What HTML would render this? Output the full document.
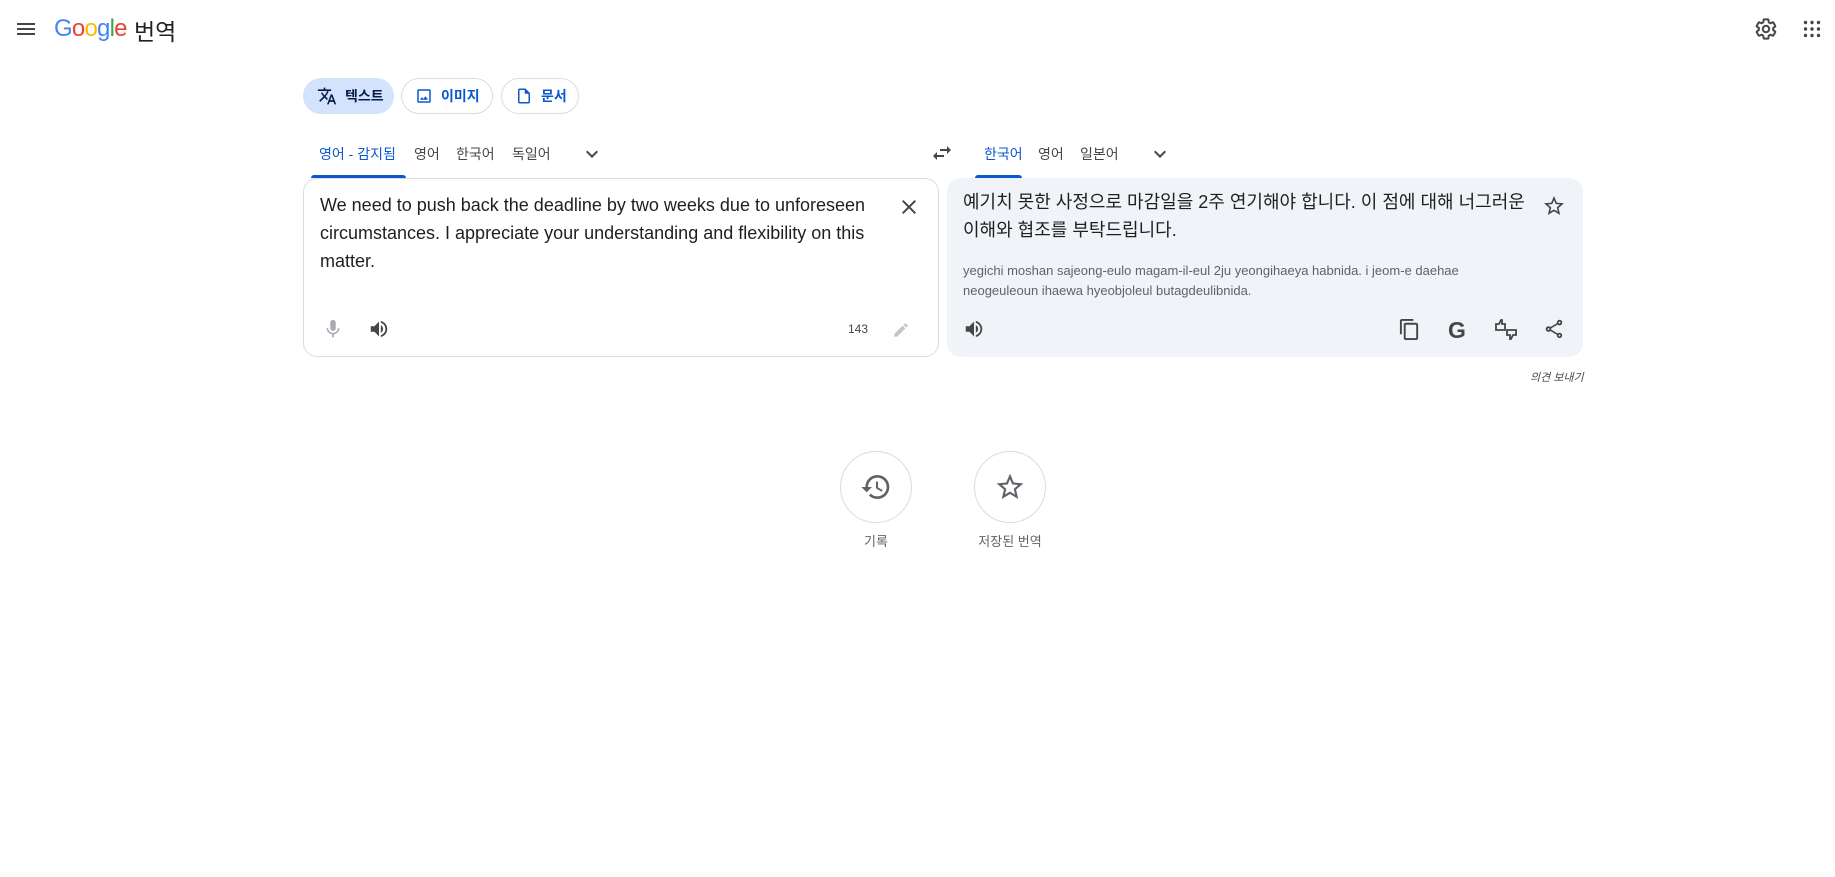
<!DOCTYPE html>
<html><head><meta charset="utf-8"><style>
*{box-sizing:border-box;margin:0;padding:0}
body{width:1835px;height:877px;background:#fff;font-family:"Liberation Sans","Noto Sans CJK KR",sans-serif;color:#202124;position:relative;overflow:hidden}
.a{position:absolute}
.ic{position:absolute;fill:#5f6368}
.chip{position:absolute;top:78px;height:36px;border:1px solid #dadce0;border-radius:18px;font-size:14px;font-weight:bold;color:#0b57d0;display:flex;align-items:center;gap:8px;padding-left:13px}
.tab{position:absolute;top:144px;font-size:14px;color:#444746}
.box{position:absolute;top:178px;height:179px;width:636px;border-radius:14px}
</style></head><body>
<svg class="ic" style="left:14px;top:17px;fill:#444746" width="24" height="24" viewBox="0 0 24 24"><path d="M3 18h18v-2H3v2zm0-5h18v-2H3v2zm0-7v2h18V6H3z"/></svg>
<div class="a" style="left:54px;top:15px;font-size:24px;letter-spacing:-0.8px"><span style="color:#4285f4">G</span><span style="color:#ea4335">o</span><span style="color:#fbbc05">o</span><span style="color:#4285f4">g</span><span style="color:#34a853">l</span><span style="color:#ea4335">e</span></div>
<div class="a" style="left:134px;top:13px;font-size:23px;color:#202124">번역</div>
<svg class="ic" style="left:1754px;top:17px;fill:none;stroke:#444746;stroke-width:2" width="24" height="24" viewBox="0 0 24 24"><path d="M19.14 12.94c.04-.3.06-.61.06-.94 0-.32-.02-.64-.07-.94l2.03-1.58a.49.49 0 00.12-.61l-1.92-3.32a.488.488 0 00-.59-.22l-2.39.96c-.5-.38-1.030-.7-1.62-.94l-.36-2.54a.484.484 0 00-.48-.41h-3.84c-.24 0-.43.17-.47.41l-.36 2.54c-.59.24-1.13.57-1.62.94l-2.39-.96c-.22-.08-.47 0-.59.22L2.74 8.87c-.12.21-.08.47.12.61l2.03 1.58c-.05.3-.09.63-.09.94s.02.64.07.94l-2.03 1.58a.49.49 0 00-.12.61l1.92 3.32c.12.22.37.29.59.22l2.39-.96c.5.38 1.03.7 1.62.94l.36 2.54c.05.24.24.41.48.41h3.84c.24 0 .44-.17.47-.41l.36-2.54c.59-.24 1.13-.56 1.62-.94l2.39.96c.22.08.47 0 .59-.22l1.92-3.32c.12-.22.07-.47-.12-.61l-2.01-1.58z"/><circle cx="12" cy="12" r="3.2"/></svg>
<svg class="ic" style="left:1803px;top:20px;fill:#444746" width="18" height="18" viewBox="0 0 18 18"><g><circle cx="2.5" cy="2.5" r="1.7"/><circle cx="9" cy="2.5" r="1.7"/><circle cx="15.5" cy="2.5" r="1.7"/><circle cx="2.5" cy="9" r="1.7"/><circle cx="9" cy="9" r="1.7"/><circle cx="15.5" cy="9" r="1.7"/><circle cx="2.5" cy="15.5" r="1.7"/><circle cx="9" cy="15.5" r="1.7"/><circle cx="15.5" cy="15.5" r="1.7"/></g></svg>

<div class="chip" style="left:303px;width:91px;background:#d3e3fd;border-color:#d3e3fd;color:#041e49"><svg width="20" height="20" viewBox="0 0 24 24" fill="#041e49"><path d="M12.87 15.07l-2.54-2.51.03-.03A17.52 17.52 0 0014.07 6H17V4h-7V2H8v2H1v2h11.17C11.5 7.92 10.44 9.75 9 11.350 8.07 10.32 7.3 9.19 6.69 8h-2c.73 1.63 1.73 3.17 2.98 4.56l-5.09 5.02L4 19l5-5 3.11 3.11.76-2.04zM18.5 10h-2L12 22h2l1.12-3h4.75L21 22h2l-4.5-12zm-2.62 7l1.62-4.33L19.12 17h-3.24z"/></svg>텍스트</div>
<div class="chip" style="left:401px;width:92px"><svg width="18" height="18" viewBox="0 0 24 24" fill="#0b57d0"><path d="M19 3H5a2 2 0 00-2 2v14a2 2 0 002 2h14a2 2 0 002-2V5a2 2 0 00-2-2zm0 16H5V5h14v14zm-5.04-6.71l-2.75 3.54-1.96-2.36L6.5 17h11l-3.54-4.71z"/></svg>이미지</div>
<div class="chip" style="left:501px;width:78px"><svg width="18" height="18" viewBox="0 0 24 24" fill="#0b57d0"><path d="M14 2H6c-1.1 0-2 .9-2 2v16c0 1.1.9 2 2 2h12c1.1 0 2-.9 2-2V8l-6-6zm4 18H6V4h7v5h5v11z"/></svg>문서</div>

<div class="tab" style="left:319px;color:#0b57d0">영어 - 감지됨</div>
<div class="a" style="left:311px;top:175px;width:95px;height:3px;background:#0b57d0;border-radius:3px 3px 0 0"></div>
<div class="tab" style="left:414px">영어</div>
<div class="tab" style="left:456px">한국어</div>
<div class="tab" style="left:512px">독일어</div>
<svg class="ic" style="left:580px;top:142px;fill:#444746" width="24" height="24" viewBox="0 0 24 24"><path d="M16.59 8.59L12 13.17 7.41 8.59 6 10l6 6 6-6z"/></svg>
<svg class="ic" style="left:930px;top:141px;fill:#444746" width="24" height="24" viewBox="0 0 24 24"><path d="M6.99 11L3 15l3.99 4v-3H14v-2H6.99v-3zM21 9l-3.99-4v3H10v2h7.01v3L21 9z"/></svg>
<div class="tab" style="left:984px;color:#0b57d0">한국어</div>
<div class="a" style="left:975px;top:175px;width:47px;height:3px;background:#0b57d0;border-radius:3px 3px 0 0"></div>
<div class="tab" style="left:1038px">영어</div>
<div class="tab" style="left:1080px">일본어</div>
<svg class="ic" style="left:1148px;top:142px;fill:#444746" width="24" height="24" viewBox="0 0 24 24"><path d="M16.59 8.59L12 13.17 7.41 8.59 6 10l6 6 6-6z"/></svg>

<div class="box" style="left:303px;border:1px solid #dadce0"></div>
<div class="a" style="left:320px;top:191px;width:570px;font-size:18px;line-height:28px;color:#1f1f1f">We need to push back the deadline by two weeks due to unforeseen circumstances. I appreciate your understanding and flexibility on this matter.</div>
<svg class="ic" style="left:897px;top:195px;fill:#444746" width="24" height="24" viewBox="0 0 24 24"><path d="M19 6.41L17.59 5 12 10.59 6.41 5 5 6.41 10.59 12 5 17.59 6.41 19 12 13.41 17.59 19 19 17.59 13.41 12z"/></svg>
<svg class="ic" style="left:322px;top:318px;fill:#a8abaf" width="22" height="22" viewBox="0 0 24 24"><path d="M12 14c1.66 0 3-1.34 3-3V5c0-1.66-1.34-3-3-3S9 3.34 9 5v6c0 1.66 1.34 3 3 3zm5.3-3c0 3-2.54 5.1-5.3 5.1S6.7 14 6.7 11H5c0 3.41 2.72 6.23 6 6.72V21h2v-3.28c3.28-.48 6-3.3 6-6.72h-1.7z"/></svg>
<svg class="ic" style="left:368px;top:318px;fill:#444746" width="22" height="22" viewBox="0 0 24 24"><path d="M3 9v6h4l5 5V4L7 9H3zm13.5 3A4.5 4.5 0 0014 7.97v8.05c1.48-.73 2.5-2.25 2.5-4.02zM14 3.23v2.06c2.89.86 5 3.54 5 6.71s-2.11 5.850-5 6.71v2.06c4.01-.91 7-4.49 7-8.77s-2.99-7.86-7-8.77z"/></svg>
<div class="a" style="left:848px;top:322px;font-size:12px;color:#444746">143</div>
<svg class="ic" style="left:892px;top:321px;fill:#c4c7c5" width="18" height="18" viewBox="0 0 24 24"><path d="M3 17.25V21h3.75L17.81 9.94l-3.75-3.75L3 17.25zM20.71 7.04a1 1 0 000-1.41l-2.34-2.34a1 1 0 00-1.41 0l-1.830 1.83 3.75 3.75 1.83-1.83z"/></svg>

<div class="box" style="left:947px;background:#f0f4f9"></div>
<div class="a" style="left:963px;top:188px;width:565px;font-size:18px;line-height:28px;color:#1f1f1f">예기치 못한 사정으로 마감일을 2주 연기해야 합니다. 이 점에 대해 너그러운 이해와 협조를 부탁드립니다.</div>
<svg class="ic" style="left:1542px;top:194px;fill:#444746" width="24" height="24" viewBox="0 0 24 24"><path d="M22 9.24l-7.19-.62L12 2 9.19 8.63 2 9.24l5.46 4.73L5.82 21 12 17.27 18.18 21l-1.63-7.03L22 9.24zM12 15.4l-3.76 2.27 1-4.28-3.32-2.88 4.38-.38L12 6.1l1.71 4.04 4.38.38-3.32 2.88 1 4.28L12 15.4z"/></svg>
<div class="a" style="left:963px;top:261px;width:540px;font-size:13px;line-height:20px;color:#5f6368">yegichi moshan sajeong-eulo magam-il-eul 2ju yeongihaeya habnida. i jeom-e daehae neogeuleoun ihaewa hyeobjoleul butagdeulibnida.</div>
<svg class="ic" style="left:963px;top:318px;fill:#444746" width="22" height="22" viewBox="0 0 24 24"><path d="M3 9v6h4l5 5V4L7 9H3zm13.5 3A4.5 4.5 0 0014 7.97v8.05c1.48-.73 2.5-2.25 2.5-4.02zM14 3.23v2.06c2.89.86 5 3.54 5 6.71s-2.11 5.85-5 6.71v2.06c4.01-.91 7-4.49 7-8.77s-2.99-7.86-7-8.77z"/></svg>
<svg class="ic" style="left:1398px;top:318px;fill:#444746" width="23" height="23" viewBox="0 0 24 24"><path d="M16 1H4c-1.1 0-2 .9-2 2v14h2V3h12V1zm3 4H8c-1.1 0-2 .9-2 2v14c0 1.1.9 2 2 2h11c1.1 0 2-.9 2-2V7c0-1.1-.9-2-2-2zm0 16H8V7h11v14z"/></svg>
<div class="a" style="left:1448px;top:317px;font-size:23px;font-weight:bold;color:#444746">G</div>
<svg class="ic" style="left:1494px;top:318px;fill:none;stroke:#444746;stroke-width:1.8" width="24" height="24" viewBox="0 0 24 24"><path d="M2 12V6h3l2-4h1v4h3v6zM13 12h9v5h-3l-2 4h-1v-4h-3z"/></svg>
<svg class="ic" style="left:1543px;top:318px;fill:#444746" width="22" height="22" viewBox="0 0 24 24"><path d="M18 16.08c-.76 0-1.44.3-1.96.77L8.91 12.7c.05-.23.09-.46.09-.7s-.04-.47-.09-.7l7.05-4.11A2.99 2.99 0 0021 5a3 3 0 10-5.91.7L8.04 9.81A2.99 2.99 0 003 12a3 3 0 005.04 2.19l7.12 4.16c-.05.21-.08.43-.08.65A2.92 2.92 0 1018 16.08zM18 4c.55 0 1 .45 1 1s-.45 1-1 1-1-.45-1-1 .45-1 1-1zM6 13c-.55 0-1-.45-1-1s.45-1 1-1 1 .45 1 1-.45 1-1 1zm12 7.02c-.55 0-1-.45-1-1s.45-1 1-1 1 .45 1 1-.45 1-1 1z"/></svg>
<div class="a" style="left:1530px;top:369px;font-size:11px;font-style:italic;color:#444746">의견 보내기</div>

<div class="a" style="left:840px;top:451px;width:72px;height:72px;border:1px solid #dadce0;border-radius:50%"></div>
<svg class="ic" style="left:860px;top:471px;fill:#5f6368" width="32" height="32" viewBox="0 0 24 24"><path d="M13 3a9 9 0 00-9 9H1l3.89 3.89.07.14L9 12H6c0-3.87 3.13-7 7-7s7 3.13 7 7-3.13 7-7 7c-1.93 0-3.68-.79-4.94-2.06l-1.42 1.42A8.954 8.954 0 0013 21a9 9 0 000-18zm-1 5v5l4.28 2.54.72-1.21-3.5-2.08V8H12z"/></svg>
<div class="a" style="left:840px;top:531px;width:72px;text-align:center;font-size:13px;color:#5f6368">기록</div>
<div class="a" style="left:974px;top:451px;width:72px;height:72px;border:1px solid #dadce0;border-radius:50%"></div>
<svg class="ic" style="left:994px;top:471px;fill:#5f6368" width="32" height="32" viewBox="0 0 24 24"><path d="M22 9.24l-7.19-.62L12 2 9.19 8.63 2 9.24l5.46 4.73L5.82 21 12 17.27 18.18 21l-1.63-7.03L22 9.24zM12 15.4l-3.76 2.27 1-4.28-3.32-2.88 4.38-.38L12 6.1l1.71 4.04 4.38.38-3.32 2.88 1 4.28L12 15.4z"/></svg>
<div class="a" style="left:960px;top:531px;width:100px;text-align:center;font-size:13px;color:#5f6368">저장된 번역</div>
</body></html>
